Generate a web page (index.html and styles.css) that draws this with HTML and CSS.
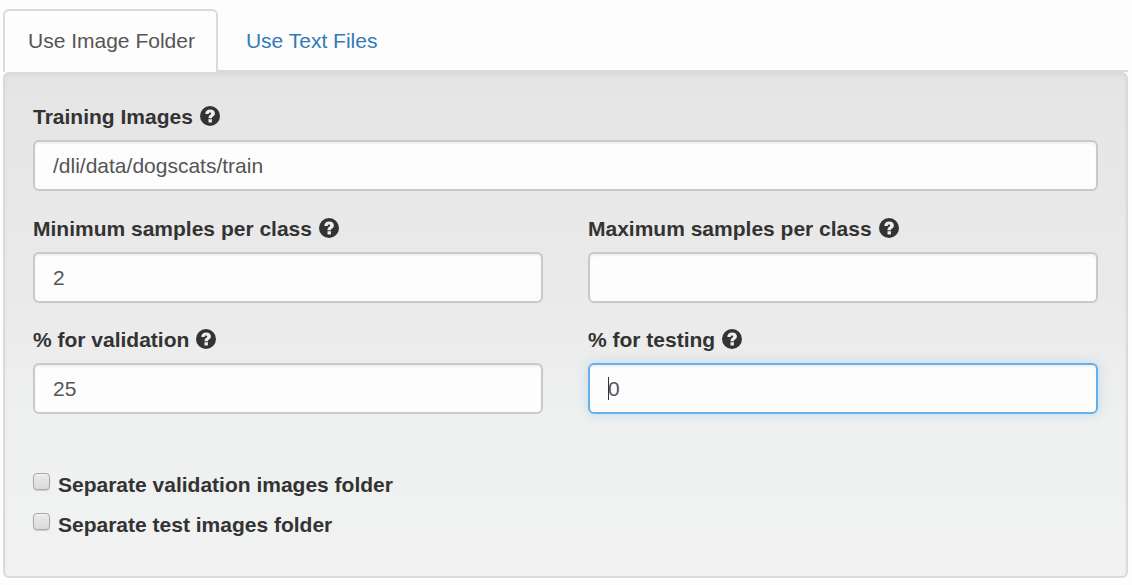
FILE: index.html
```html
<!DOCTYPE html>
<html lang="en">
<head>
<meta charset="utf-8">
<title>New Dataset</title>
<link rel="stylesheet" href="styles.css">
</head>
<body>
<svg class="sprite" aria-hidden="true">
  <symbol id="help" viewBox="0 0 20 20">
    <circle cx="10" cy="10" r="10" fill="#333"/>
    <path d="M5.300 8C5.300 5 7.200 3.400 10.200 3.400c2.900 0 4.700 1.500 4.700 3.900 0 1.700-.9 2.600-1.900 3.300-.8.600-1.100.9-1.100 1.700H8.500c0-1.900.5-2.600 1.500-3.300.8-.6 1.200-.9 1.200-1.500 0-.6-.4-.9-1.100-.9-.9 0-1.400.5-1.400 1.400z" fill="#eee"/>
    <path d="M8.500 13.200h3.400v3.300H8.500z" fill="#eee"/>
  </symbol>
</svg>
<nav class="tabs">
  <a class="tab tab-active" href="#folder" aria-current="page">Use Image Folder</a>
  <a class="tab" href="#text">Use Text Files</a>
</nav>
<form class="well" id="folder">
  <div class="group group-wide">
    <div class="caption"><label for="train">Training Images</label><svg class="help"><use href="#help"/></svg></div>
    <input class="control" id="train" type="text" value="/dli/data/dogscats/train">
  </div>
  <div class="group">
    <div class="caption"><label for="min">Minimum samples per class</label><svg class="help"><use href="#help"/></svg></div>
    <input class="control" id="min" type="text" value="2">
  </div>
  <div class="group">
    <div class="caption"><label for="max">Maximum samples per class</label><svg class="help"><use href="#help"/></svg></div>
    <input class="control" id="max" type="text">
  </div>
  <div class="group">
    <div class="caption"><label for="val">% for validation</label><svg class="help"><use href="#help"/></svg></div>
    <input class="control" id="val" type="text" value="25">
  </div>
  <div class="group">
    <div class="caption"><label for="test">% for testing</label><svg class="help"><use href="#help"/></svg></div>
    <div class="field">
      <input class="control control-focus" id="test" type="text" value="0">
      <span class="caret"></span>
    </div>
  </div>
  <div class="checks">
    <label class="check"><input class="box" type="checkbox">Separate validation images folder</label>
    <label class="check"><input class="box" type="checkbox">Separate test images folder</label>
  </div>
</form>
</body>
</html>
```
FILE: styles.css
```css
* {
  box-sizing: border-box;
}
body {
  margin: 0;
  padding: 9px 4px 7px 3px;
  background: #fdfdfd;
  color: #333;
  font: 21px/30px "Liberation Sans", Arial, sans-serif;
}
.sprite {
  display: none;
}
.tabs {
  display: flex;
  gap: 3px;
  border-bottom: 2px solid #dadada;
}
.tab {
  margin-bottom: -2px;
  padding: 15px 21px 16px 23px;
  border: 2px solid transparent;
  border-bottom: 0;
  border-radius: 6px 6px 0 0;
  color: #337ab7;
  text-decoration: none;
}
.tab-active {
  border-color: #dadada;
  background: #fdfdfd;
  color: #555;
}
.well {
  display: grid;
  grid-template-columns: 1fr 1fr;
  gap: 22px 45px;
  padding: 28px 28px 36px;
  border: 2px solid #dadada;
  border-radius: 6px;
  background: linear-gradient(#e5e5e5, #ebebeb 50%, #eff1f0 70%, #f0f1f1 85%, #f2f2f2);
  box-shadow: inset 0 2px 5px rgba(0, 0, 0, 0.04);
}
.group-wide,
.checks {
  grid-column: 1 / -1;
}
.group-wide {
  margin-bottom: 1px;
}
.caption {
  display: flex;
  gap: 7px;
  margin-bottom: 8px;
  font-weight: bold;
}
.help {
  width: 20px;
  height: 20px;
  margin-top: 4px;
}
.control {
  display: block;
  width: 100%;
  height: 51px;
  padding: 0 18px;
  border: 2px solid #c9c9c9;
  border-radius: 6px;
  background: #fdfdfd;
  box-shadow: inset 0 2px 2px rgba(0, 0, 0, 0.05);
  color: #555;
  font: inherit;
  outline: 0;
}
.control-focus,
.control:focus {
  border-color: #66afe9;
  box-shadow: inset 0 2px 2px rgba(0, 0, 0, 0.05), 0 0 12px rgba(102, 175, 233, 0.35);
}
.field {
  position: relative;
}
.caret {
  position: absolute;
  top: 14px;
  left: 20px;
  width: 1px;
  height: 23px;
  background: #333;
}
.checks {
  display: grid;
  gap: 10px;
  padding-top: 34px;
  font-weight: bold;
}
.check {
  display: flex;
  gap: 8px;
}
.box {
  appearance: none;
  width: 17px;
  height: 17px;
  margin: 3px 0 0;
  border: 1px solid #a6a6a6;
  border-radius: 4px;
  background: linear-gradient(#eaeaea, #dadada);
  box-shadow: 0 1px 1px rgba(0, 0, 0, 0.15), inset 0 1px 1px #f4f4f4;
}
.box:checked {
  background: #66afe9;
}
```
